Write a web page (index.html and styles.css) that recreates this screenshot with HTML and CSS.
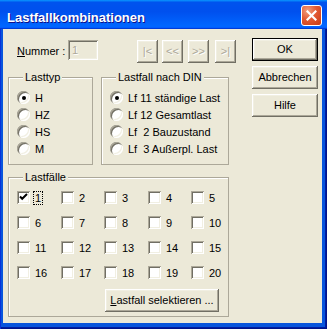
FILE: index.html
```html
<!DOCTYPE html>
<html>
<head>
<meta charset="utf-8">
<link rel="stylesheet" href="styles.css">
</head>
<body>
<div class="window">
  <div class="titlebar">
    <span class="title">Lastfallkombinationen</span>
    <span class="close"><svg width="11" height="11" viewBox="0 0 11 11"><path d="M1.5 1.5 L9.5 9.5 M9.5 1.5 L1.5 9.5" stroke="#fff" stroke-width="2.2" stroke-linecap="square" fill="none"/></svg></span>
  </div>
  <div class="client">
    <div class="main">
      <div class="numrow">
        <span class="numlabel"><u>N</u>ummer :</span>
        <span class="field">1</span>
        <div class="nav">
          <span class="btn navbtn disabled">|&lt;</span>
          <span class="btn navbtn disabled n2">&lt;&lt;</span>
          <span class="btn navbtn disabled n3">&gt;&gt;</span>
          <span class="btn navbtn disabled n4">&gt;|</span>
        </div>
      </div>
      <div class="groups">
        <fieldset class="group g-typ">
          <legend>Lasttyp</legend>
          <div class="opt"><span class="radio on"></span><span>H</span></div>
          <div class="opt"><span class="radio"></span><span>HZ</span></div>
          <div class="opt"><span class="radio"></span><span>HS</span></div>
          <div class="opt"><span class="radio"></span><span>M</span></div>
        </fieldset>
        <fieldset class="group g-din">
          <legend>Lastfall nach DIN</legend>
          <div class="opt"><span class="radio on"></span><span>Lf 11 ständige Last</span></div>
          <div class="opt"><span class="radio"></span><span>Lf 12 Gesamtlast</span></div>
          <div class="opt"><span class="radio"></span><span>Lf  2 Bauzustand</span></div>
          <div class="opt"><span class="radio"></span><span>Lf  3 Außerpl. Last</span></div>
        </fieldset>
      </div>
      <fieldset class="group g-faelle">
        <legend>Lastfälle</legend>
        <div class="checks">
          <div class="cell"><span class="cb"><svg width="9" height="9" viewBox="0 0 9 9"><path d="M1 3.5 L3.2 5.8 L8 1" stroke="#000" stroke-width="2" fill="none"/></svg></span><span class="cbl focus">1</span></div>
          <div class="cell"><span class="cb"></span><span class="cbl">2</span></div>
          <div class="cell"><span class="cb"></span><span class="cbl">3</span></div>
          <div class="cell"><span class="cb"></span><span class="cbl">4</span></div>
          <div class="cell"><span class="cb"></span><span class="cbl">5</span></div>
          <div class="cell"><span class="cb"></span><span class="cbl">6</span></div>
          <div class="cell"><span class="cb"></span><span class="cbl">7</span></div>
          <div class="cell"><span class="cb"></span><span class="cbl">8</span></div>
          <div class="cell"><span class="cb"></span><span class="cbl">9</span></div>
          <div class="cell"><span class="cb"></span><span class="cbl">10</span></div>
          <div class="cell"><span class="cb"></span><span class="cbl">11</span></div>
          <div class="cell"><span class="cb"></span><span class="cbl">12</span></div>
          <div class="cell"><span class="cb"></span><span class="cbl">13</span></div>
          <div class="cell"><span class="cb"></span><span class="cbl">14</span></div>
          <div class="cell"><span class="cb"></span><span class="cbl">15</span></div>
          <div class="cell"><span class="cb"></span><span class="cbl">16</span></div>
          <div class="cell"><span class="cb"></span><span class="cbl">17</span></div>
          <div class="cell"><span class="cb"></span><span class="cbl">18</span></div>
          <div class="cell"><span class="cb"></span><span class="cbl">19</span></div>
          <div class="cell"><span class="cb"></span><span class="cbl">20</span></div>
        </div>
        <span class="btn select-btn"><u>L</u>astfall selektieren ...</span>
      </fieldset>
    </div>
    <div class="actions">
      <span class="btn default">OK</span>
      <span class="btn">Abbrechen</span>
      <span class="btn">Hilfe</span>
    </div>
  </div>
</div>
</body>
</html>
```

FILE: styles.css
```css
html, body {
  margin: 0;
  padding: 0;
  background: #ffffff;
}
body {
  font-family: "Liberation Sans", Arial, sans-serif;
  font-size: 11px;
  color: #000;
}
.window {
  width: 327px;
  height: 329px;
  box-sizing: border-box;
  display: flex;
  flex-direction: column;
  background: #0855dd;
  box-shadow: inset 1px 0 #0831d9, inset -1px -1px #00138c, inset -2px -2px #001ea0;
  overflow: hidden;
}
.titlebar {
  height: 29px;
  flex: none;
  display: flex;
  align-items: flex-start;
  background: linear-gradient(180deg, #0997ff, #0053ee 8%, #0050ee 40%, #0066ff 88%, #0066ff 93%, #005bff 95%, #003dd7 96%, #003dd7);
  color: #fff;
}
.title {
  font-family: "Liberation Sans", Arial, sans-serif;
  font-weight: bold;
  font-size: 13px;
  line-height: 15px;
  padding: 10px 0 0 7px;
  text-shadow: 1px 1px #0f1089;
}
.close {
  margin: 5px 5px 0 auto;
  width: 21px;
  height: 21px;
  box-sizing: border-box;
  border: 1px solid #fff;
  border-radius: 3px;
  background: radial-gradient(circle at 30% 25%, #f0a080 0%, #e25a34 45%, #c83a16 100%);
  display: flex;
  align-items: center;
  justify-content: center;
}
.client {
  flex: 1;
  margin: 0 5px 6px 3px;
  background: #ece9d8;
  display: flex;
  gap: 23px;
  padding: 9px 0 0 5px;
}
.main {
  width: 221px;
  flex: none;
  margin-top: 2px;
  display: flex;
  flex-direction: column;
}
.numrow {
  display: flex;
  align-items: flex-start;
  height: 23px;
}
.numrow > * {
  flex: none;
}
.numlabel {
  margin: 5px 0 0 9px;
  width: 51px;
  line-height: 13px;
  white-space: nowrap;
}
.field {
  width: 30px;
  height: 20px;
  box-sizing: border-box;
  padding-left: 4px;
  line-height: 20px;
  color: #aca899;
  text-shadow: 1px 1px #fff;
  box-shadow: inset 1px 1px #aca899, inset -1px -1px #fff, inset 2px 2px #716f64, inset -2px -2px #f1efe2;
}
.nav {
  display: flex;
  margin-left: 39px;
}
.btn {
  display: flex;
  align-items: center;
  justify-content: center;
  box-sizing: border-box;
  background: #ece9d8;
  height: 23px;
  line-height: 13px;
  white-space: nowrap;
  box-shadow: inset -1px -1px #716f64, inset 1px 1px #fff, inset -2px -2px #aca899, inset 2px 2px #f1efe2;
}
.btn.default {
  box-shadow: inset 0 0 0 1px #000, inset -2px -2px #716f64, inset 2px 2px #fff, inset -3px -3px #aca899, inset 3px 3px #f1efe2;
}
.navbtn {
  width: 21px;
  flex: none;
}
.n2 { margin-left: 4px; }
.n3 { margin-left: 5px; }
.n4 { margin-left: 6px; }
.disabled {
  color: #aca899;
  text-shadow: 1px 1px #fff;
}
.groups {
  display: flex;
  gap: 8px;
  margin-top: 8px;
}
.group {
  margin: 0;
  min-width: 0;
  box-sizing: border-box;
  border: 1px solid #aca899;
  box-shadow: inset 1px 1px #fff;
  padding: 5px 0 7px 8px;
}
.group legend {
  margin-left: 6px;
  padding: 0 2px;
  line-height: 13px;
  background: #ece9d8;
}
.g-typ { width: 85px; flex: none; }
.g-din { width: 128px; flex: none; }
.opt {
  height: 17px;
  display: flex;
  align-items: center;
  gap: 5px;
  white-space: pre;
}
.radio {
  width: 13px;
  height: 13px;
  flex: none;
  border-radius: 50%;
  background: #fff;
  box-shadow: inset 1px 1px #aca899, inset 2px 2px #716f64, inset -1px -1px #fff, inset -2px -2px #f1efe2;
  display: flex;
  align-items: center;
  justify-content: center;
}
.radio.on::after {
  content: "";
  width: 4px;
  height: 4px;
  border-radius: 50%;
  background: #000;
}
.g-faelle {
  width: 221px;
  margin-top: 6px;
  padding: 7px 0 4px 8px;
}
.checks {
  display: grid;
  grid-template-columns: 44px 43px 44px 43px 44px;
  grid-auto-rows: 13px;
  row-gap: 12px;
}
.cell {
  display: flex;
  align-items: center;
  height: 13px;
}
.cb {
  width: 13px;
  height: 13px;
  flex: none;
  background: #fff;
  box-shadow: inset 1px 1px #aca899, inset -1px -1px #fff, inset 2px 2px #716f64, inset -2px -2px #f1efe2;
  display: flex;
  align-items: center;
  justify-content: center;
}
.cbl {
  margin-left: 3px;
  padding: 0 1px;
  border: 1px dotted transparent;
  line-height: 12px;
}
.cbl.focus {
  border-color: #000;
}
.select-btn {
  margin: 10px 0 0 88px;
  width: 114px;
}
.actions {
  width: 66px;
  flex: none;
  display: flex;
  flex-direction: column;
  gap: 5px;
}
```
